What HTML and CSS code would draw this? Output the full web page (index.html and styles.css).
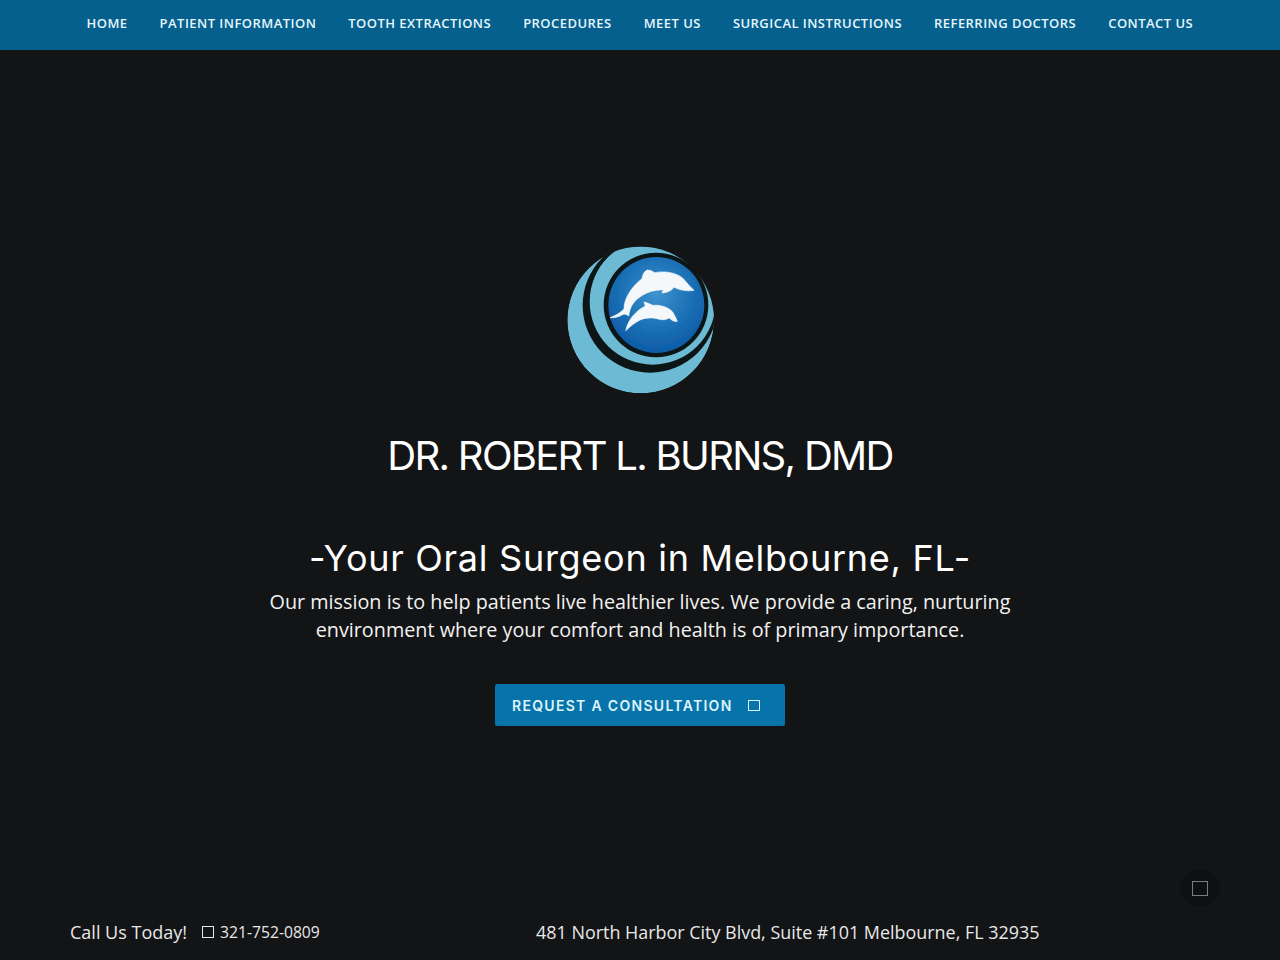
FILE: index.html

```html
<!DOCTYPE html>
<html lang="en">
<head>
  <meta charset="UTF-8">
  <title>Dr. Robert L. Burns, DMD</title>
  <link rel="stylesheet" href="styles.css">
</head>
<body>

<!-- Top navigation -->
<nav class="top-nav">
  <a href="#">Home</a>
  <a href="#">Patient Information</a>
  <a href="#">Tooth Extractions</a>
  <a href="#">Procedures</a>
  <a href="#">Meet Us</a>
  <a href="#">Surgical Instructions</a>
  <a href="#">Referring Doctors</a>
  <a href="#">Contact Us</a>
</nav>

<!-- Hero -->
<main class="hero">
  <svg class="logo" viewBox="0 0 600 540" width="200" height="180" role="img" aria-label="Dolphin logo">
    <defs>
      <clipPath id="logo-clip"><circle cx="302" cy="270" r="220"/></clipPath>
      <radialGradient id="ball" cx="50%" cy="38%" r="62%">
        <stop offset="0" stop-color="#3f93cd"/>
        <stop offset="0.6" stop-color="#1b70b5"/>
        <stop offset="1" stop-color="#0d5ba6"/>
      </radialGradient>
      <filter id="soft"><feGaussianBlur stdDeviation="1.6"/></filter>
    </defs>
    <g filter="url(#soft)">
      <g clip-path="url(#logo-clip)">
        <circle cx="302" cy="270" r="220" fill="#6cbad3"/>
        <circle cx="330" cy="226" r="202" fill="#0b1215"/>
        <circle cx="338" cy="215" r="189" fill="#6cbad3"/>
      </g>
      <circle cx="348" cy="225" r="157" fill="#0b1215"/>
      <circle cx="349" cy="225" r="144" fill="url(#ball)"/>
      <path class="dolphin" d="M210 263 C228 256 244 246 252 236 C252 208 272 172 306 146 C308 134 312 124 322 120 C330 120 338 124 344 128 C376 122 410 128 430 146 C442 160 452 172 462 181 C444 184 422 182 402 172 C396 180 384 188 366 189 L370 180 C350 178 324 184 304 198 C284 212 270 226 266 258 C256 250 250 252 240 258 C230 262 220 264 210 263 Z"/>
      <path class="dolphin" d="M257 302 C262 280 272 262 288 248 C298 238 306 234 316 228 L312 216 C322 218 330 222 338 226 C362 224 386 232 398 246 C404 256 408 264 412 274 C402 276 394 270 388 264 C376 270 368 270 358 268 C340 262 318 262 300 270 C284 278 270 290 257 302 Z"/>
    </g>
  </svg>

  <h1>DR. ROBERT L. BURNS, DMD</h1>
  <h2>-Your Oral Surgeon in Melbourne, FL-</h2>
  <p>Our mission is to help patients live healthier lives. We provide a caring, nurturing environment where your comfort and health is of primary importance.</p>
  <a class="cta" href="#">Request a Consultation <span class="tofu"></span></a>
</main>

<!-- Contact strip -->
<footer class="contact-bar">
  <div class="call">
    <span>Call Us Today!</span>
    <span class="tofu"></span>
    <a href="#">321-752-0809</a>
  </div>
  <div class="address">481 North Harbor City Blvd, Suite #101 Melbourne, FL 32935</div>
</footer>

<!-- Floating back to top button -->
<a class="float-btn" href="#"><span class="tofu"></span></a>

</body>
</html>
```

FILE: styles.css

```css
* {
  box-sizing: border-box;
  margin: 0;
  padding: 0;
}
html, body {
  height: 100%;
  background: #131416;
  font-family: 'Open Sans', sans-serif;
  color: #fff;
  overflow: hidden;
}
body {
  display: flex;
  flex-direction: column;
  height: 960px;
}
a {
  color: inherit;
  text-decoration: none;
}

/* Top navigation */
.top-nav {
  height: 50px;
  flex: none;
  background: #05608e;
  display: flex;
  gap: 32px;
  padding: 14px 0 0 86.5px;
}
.top-nav a {
  font-size: 13px;
  font-weight: 600;
  line-height: 18px;
  letter-spacing: 0.46px;
  text-transform: uppercase;
  color: #e6f6fc;
  white-space: nowrap;
}

/* Hero */
.hero {
  flex: 1;
  display: flex;
  flex-direction: column;
  align-items: center;
  padding-top: 180px;
}
.logo {
  display: block;
}
.dolphin {
  fill: #f4f8fb;
  stroke: #f4f8fb;
  stroke-width: 2;
}
.hero h1 {
  font-family: 'Inter', sans-serif;
  font-weight: 400;
  font-size: 40px;
  line-height: 52px;
  letter-spacing: -1.7px;
  margin-top: 20px;
  text-align: center;
}
.hero h2 {
  font-family: 'Inter', sans-serif;
  font-weight: 400;
  font-size: 36px;
  line-height: 48px;
  letter-spacing: 0.72px;
  margin-top: 52px;
  text-align: center;
}
.hero p {
  width: 780px;
  font-size: 19.8px;
  line-height: 28px;
  margin-top: 6px;
  text-align: center;
  color: #f2f2f2;
}

/* Call to action */
.cta {
  margin-top: 40px;
  width: 290px;
  height: 42px;
  background: #0673ab;
  border-radius: 2px;
  display: flex;
  align-items: center;
  padding-left: 17px;
  gap: 15px;
  font-family: 'Inter', sans-serif;
  font-size: 14px;
  font-weight: 600;
  letter-spacing: 1.3px;
  text-transform: uppercase;
  color: #dff3fa;
}
.cta .tofu {
  width: 12px;
  height: 11px;
}

/* Missing icon glyph */
.tofu {
  display: inline-block;
  width: 12px;
  height: 12px;
  border: 1px solid currentColor;
  flex: none;
}

/* Contact strip */
.contact-bar {
  flex: none;
  height: 48px;
  display: flex;
  padding: 8px 0 0 70px;
  font-size: 18px;
  line-height: 24px;
  color: #e8e8e8;
}
.call {
  width: 466px;
  display: flex;
  align-items: center;
  height: 24px;
  gap: 15px;
}
.call a {
  font-size: 15.7px;
  margin-left: -9px;
}
.address {
  font-size: 17.93px;
}

/* Floating button */
.float-btn {
  position: absolute;
  left: 1180px;
  top: 870px;
  width: 40px;
  height: 36px;
  border-radius: 18px;
  background: #0f1012;
  display: flex;
  align-items: center;
  justify-content: center;
  color: #7d7d7d;
}
.float-btn .tofu {
  width: 16px;
  height: 15px;
}
```
